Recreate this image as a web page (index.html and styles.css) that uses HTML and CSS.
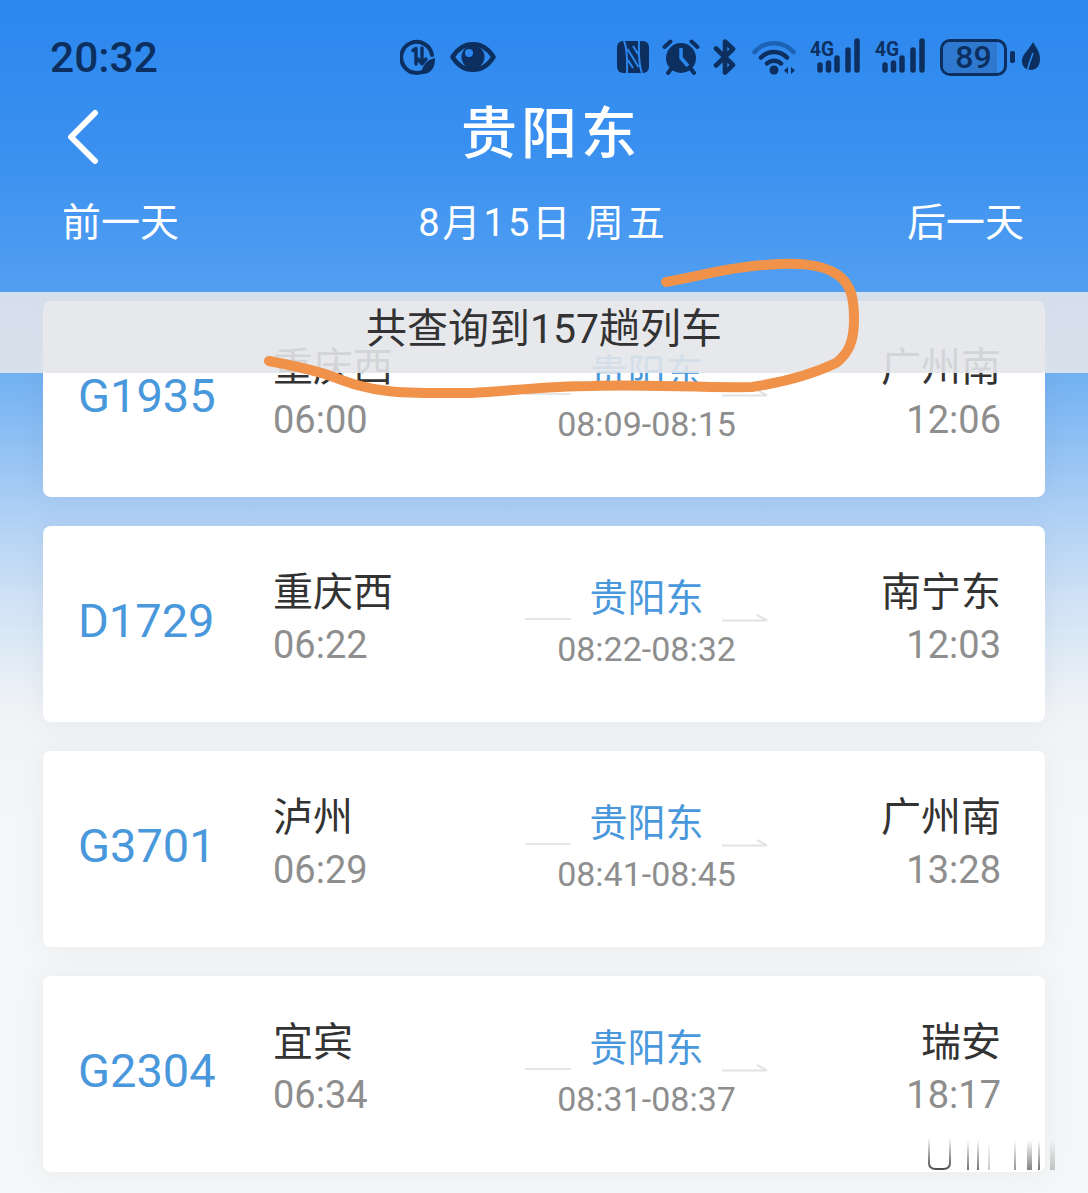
FILE: index.html
```html
<!DOCTYPE html>
<html lang="zh-CN">

<head>
    <meta charset="UTF-8">
    <meta name="viewport" content="width=device-width, initial-scale=1.0">
    <title>贵阳东</title>
    <link rel="stylesheet" href="styles.css">
</head>

<body>
    <div class="screen">
        <!-- status bar -->
        <div class="status">
            <div class="status__time">20:32</div>
            <div class="status__left">
                <svg class="icon" width="36" height="38" viewBox="0 0 36 38">
                    <path class="line" d="M28 30A15.5 15.5 0 1 1 32 17" stroke-width="4" />
                    <path class="line" d="M13 12.5L16 10.5V26M22 10V25M18 21L22 26L26 21" stroke-width="3.4" />
                    <path class="fill" d="M35 20C35 30 31 36 22 36C21 29 26 22 35 20Z" />
                </svg>
                <svg class="icon" width="46" height="32" viewBox="0 0 46 32">
                    <path class="line" d="M2.5 16C13 -1 33 -1 43.500 16C33 33 13 33 2.500 16Z" stroke-width="4.500" />
                    <circle class="fill" cx="23" cy="16" r="11.500" />
                    <circle class="cut" cx="19" cy="12" r="4" />
                </svg>
            </div>
            <div class="status__right">
                <svg class="icon" width="32" height="34" viewBox="0 0 32 34">
                    <rect class="fill" x="0" y="1" width="32" height="32" rx="6" />
                    <path class="line line--cut" d="M7 1C10 8 10.500 16 10 33M25 33C22 26 21.500 18 22 1M10.500 9L21.500 27M11 20L16 28M21 14L16 6" stroke-width="2" />
                </svg>
                <svg class="icon icon--alarm" width="38" height="36" viewBox="0 0 38 36">
                    <circle class="fill" cx="19" cy="19" r="15" />
                    <path class="line line--cut" d="M19 9V19L26 27" stroke-width="3.500" />
                    <path class="line" d="M2.500 8L8.500 2.500M35.500 8L29.500 2.500M9 30L6 34M29 30L32 34" stroke-width="4" />
                </svg>
                <svg class="icon icon--bt" width="24" height="36" viewBox="0 0 24 36">
                    <path class="line" d="M3 9.500L20 26L12 33.500V2.500L20 10L3 26.500" stroke-width="4.600" />
                </svg>
                <svg class="icon icon--wifi" width="46" height="36" viewBox="0 0 46 36">
                    <path class="line line--dim" d="M3.500 13A26 26 0 0 1 42.500 13" stroke-width="4.500" />
                    <path class="line" d="M10 18.500A18 18 0 0 1 36 18.500M16 24.500A10 10 0 0 1 30 24.500" stroke-width="4.500" />
                    <circle class="fill" cx="23" cy="31" r="4.500" />
                    <path class="fill" d="M37 28V35L33 31.500ZM40 28V35L44 31.500Z" />
                </svg>
                <svg class="icon icon--signal" width="50" height="48" viewBox="0 -6 50 48">
                    <text class="signal__label" x="0" y="17" textLength="24" lengthAdjust="spacingAndGlyphs">4G</text>
                    <path class="line" d="M10 26V31M18.500 24V31M27 19V31M38 11V31M47 2V31" stroke-width="5.500" />
                </svg>
                <svg class="icon icon--signal2" width="50" height="48" viewBox="0 -6 50 48">
                    <text class="signal__label" x="0" y="17" textLength="24" lengthAdjust="spacingAndGlyphs">4G</text>
                    <path class="line" d="M10 26V31M18.500 24V31M27 19V31M38 11V31M47 2V31" stroke-width="5.500" />
                </svg>
                <div class="battery">
                    <div class="battery__fill"></div>
                    <span class="battery__num">89</span>
                </div>
                <div class="battery__nub"></div>
                <svg class="icon icon--leaf" width="18" height="30" viewBox="0 0 18 30">
                    <path class="fill" d="M11 0C14 5 18 10 18 17C18 24 14 28 9 28C3 28 0 24 0 19C0 12 7 8 11 0Z" />
                    <path class="line line--cut" d="M11 11C9 16 7 21 5 30" stroke-width="1.600" />
                </svg>
            </div>
        </div>

        <div class="nav">
            <svg class="nav__back" width="34" height="56" viewBox="0 0 34 56">
                <path d="M29 4L5 28L29 52" />
            </svg>
            <div class="nav__title">贵阳东</div>
            <div></div>
        </div>

        <div class="dates">
            <div>前一天</div>
            <div class="dates__now">8月15日 周五</div>
            <div>后一天</div>
        </div>

        <div class="list">
            <div class="train">
                <div class="train__no">G1935</div>
                <div class="train__col">
                    <div class="train__name">重庆西</div>
                    <div class="train__time">06:00</div>
                </div>
                <div class="train__mid">
                    <div class="train__via">
                        <div class="train__dash"></div>
                        <div class="train__stop">贵阳东</div>
                        <svg class="train__arrow" width="46" height="9" viewBox="0 0 46 9"><path d="M0 7.500H45L35 2" /></svg>
                    </div>
                    <div class="train__range">08:09-08:15</div>
                </div>
                <div class="train__col train__col--end">
                    <div class="train__name">广州南</div>
                    <div class="train__time">12:06</div>
                </div>
            </div>

            <div class="train">
                <div class="train__no">D1729</div>
                <div class="train__col">
                    <div class="train__name">重庆西</div>
                    <div class="train__time">06:22</div>
                </div>
                <div class="train__mid">
                    <div class="train__via">
                        <div class="train__dash"></div>
                        <div class="train__stop">贵阳东</div>
                        <svg class="train__arrow" width="46" height="9" viewBox="0 0 46 9"><path d="M0 7.500H45L35 2" /></svg>
                    </div>
                    <div class="train__range">08:22-08:32</div>
                </div>
                <div class="train__col train__col--end">
                    <div class="train__name">南宁东</div>
                    <div class="train__time">12:03</div>
                </div>
            </div>

            <div class="train">
                <div class="train__no">G3701</div>
                <div class="train__col">
                    <div class="train__name">泸州</div>
                    <div class="train__time">06:29</div>
                </div>
                <div class="train__mid">
                    <div class="train__via">
                        <div class="train__dash"></div>
                        <div class="train__stop">贵阳东</div>
                        <svg class="train__arrow" width="46" height="9" viewBox="0 0 46 9"><path d="M0 7.500H45L35 2" /></svg>
                    </div>
                    <div class="train__range">08:41-08:45</div>
                </div>
                <div class="train__col train__col--end">
                    <div class="train__name">广州南</div>
                    <div class="train__time">13:28</div>
                </div>
            </div>

            <div class="train">
                <div class="train__no">G2304</div>
                <div class="train__col">
                    <div class="train__name">宜宾</div>
                    <div class="train__time">06:34</div>
                </div>
                <div class="train__mid">
                    <div class="train__via">
                        <div class="train__dash"></div>
                        <div class="train__stop">贵阳东</div>
                        <svg class="train__arrow" width="46" height="9" viewBox="0 0 46 9"><path d="M0 7.500H45L35 2" /></svg>
                    </div>
                    <div class="train__range">08:31-08:37</div>
                </div>
                <div class="train__col train__col--end">
                    <div class="train__name">瑞安</div>
                    <div class="train__time">18:17</div>
                </div>
                <!-- smear left over from the long screenshot -->
                <svg class="train__smear" width="128" height="36" viewBox="0 0 128 36">
                    <defs>
                        <linearGradient id="smear" x1="0" y1="0" x2="0" y2="1">
                            <stop offset="0" stop-color="#222" stop-opacity="0" />
                            <stop offset="1" stop-color="#222" stop-opacity="0.8" />
                        </linearGradient>
                    </defs>
                    <path d="M1 2V27Q1 33 8 33H15Q22 33 22 27V2" fill="none" stroke="url(#smear)" stroke-width="2" />
                    <rect x="39" y="4" width="2" height="30" fill="url(#smear)" opacity="0.8" />
                    <rect x="49" y="4" width="2" height="30" fill="url(#smear)" opacity="0.8" />
                    <rect x="60" y="4" width="2" height="30" fill="url(#smear)" opacity="0.3" />
                    <rect x="86" y="4" width="2" height="30" fill="url(#smear)" opacity="0.6" />
                    <rect x="99" y="4" width="5" height="30" fill="url(#smear)" opacity="0.7" />
                    <rect x="110" y="4" width="2" height="30" fill="url(#smear)" opacity="0.8" />
                    <rect x="122" y="4" width="5" height="30" fill="url(#smear)" opacity="0.3" />
                </svg>
            </div>
        </div>

        <!-- sticky count bar, sits over the first card -->
        <div class="count">共查询到157趟列车</div>

        <!-- hand drawn marker -->
        <svg class="marker" width="1088" height="420" viewBox="0 0 1088 420">
            <path d="M666 282C700 276 730 267 765 265C790 263 820 262 838 275C852 285 854 300 854 320C854 342 848 354 836 363C815 373 785 382 752 387C700 388 640 384 592 386C550 386 510 391 472 393C440 393 410 394 388 391C360 388 345 381 325 374C305 368 285 364 269 361" />
        </svg>
    </div>
</body>

</html>
```

FILE: styles.css
```css
* {
    box-sizing: border-box;
}

body {
    margin: 0;
    padding: 0;
    font-family: Roboto, "Noto Sans CJK SC", sans-serif;
}

.screen {
    position: relative;
    height: 1193px;
    overflow: hidden;
    padding-top: 32px;
    background: linear-gradient(180deg, #2b87ee 0, #3a90ef 150px, #529ff2 290px, #7db7f3 400px, #a9cdf4 500px, #d0e2f6 600px, #f0f3f6 710px, #f5f6f7 820px);
}

/* status bar */
.status {
    display: flex;
    align-items: center;
    height: 50px;
    padding: 0 48px 0 50px;
}

.status__time {
    width: 107px;
    font-size: 42.500px;
    font-weight: 500;
    color: #0c2f5f;
    white-space: nowrap;
}

.status__left {
    display: flex;
    align-items: center;
    gap: 14px;
    margin-left: 243px;
}

.status__right {
    display: flex;
    align-items: center;
    margin-left: auto;
}

.icon {
    display: block;
    flex: none;
}

.icon--alarm {
    margin-left: 13px;
}

.icon--bt {
    margin-left: 13px;
}

.icon--wifi {
    margin-left: 14px;
}

.icon--signal {
    margin-left: 13px;
}

.icon--signal2 {
    margin-left: 15px;
}

.icon--leaf {
    margin-left: 7px;
}

.fill {
    fill: #0c2f5f;
}

.cut {
    fill: #2b87ee;
}

.line {
    fill: none;
    stroke: #0c2f5f;
    stroke-linecap: round;
    stroke-linejoin: round;
}

.line--cut {
    stroke: #2b87ee;
    stroke-linecap: butt;
}

.line--dim {
    stroke: #1c62b4;
}

.signal__label {
    font-family: Roboto, sans-serif;
    font-size: 20px;
    font-weight: 700;
    fill: #0c2f5f;
}

.battery {
    position: relative;
    width: 67px;
    height: 37px;
    margin-left: 15px;
    border: 3px solid #0c2f5f;
    border-radius: 10px;
    overflow: hidden;
}

.battery__fill {
    width: 89%;
    height: 100%;
    background-color: #2e78d0;
}

.battery__num {
    position: absolute;
    left: 0;
    right: 0;
    top: 0;
    font-size: 32px;
    font-weight: 500;
    line-height: 31px;
    text-align: center;
    color: #0c2f5f;
}

.battery__nub {
    width: 5px;
    height: 12px;
    margin-left: 3px;
    border-radius: 2px;
    background-color: #0c2f5f;
}

/* title */
.nav {
    display: grid;
    grid-template-columns: 1fr auto 1fr;
    align-items: center;
    height: 100px;
    padding-left: 14px;
    color: #fff;
}

.nav__back {
    display: block;
    margin: 10px 0 0 52px;
}

.nav__back path {
    fill: none;
    stroke: #fff;
    stroke-width: 6;
    stroke-linecap: round;
    stroke-linejoin: round;
}

.nav__title {
    padding-top: 3px;
    font-size: 56px;
    font-weight: 500;
    letter-spacing: 4px;
    line-height: 1;
}

.dates {
    display: flex;
    justify-content: space-between;
    align-items: center;
    height: 76px;
    padding: 0 64px 2px 62px;
    font-size: 39px;
    color: #fff;
}

.dates__now {
    letter-spacing: 3px;
    font-size: 38px;
}

/* cards */
.list {
    display: flex;
    flex-direction: column;
    gap: 29px;
    padding: 43px 43px 0;
}

.train {
    position: relative;
    display: grid;
    grid-template-columns: 195px 252px 243px 232px;
    align-items: start;
    height: 196px;
    padding-left: 35px;
    border-radius: 8px;
    background-color: #fff;
    box-shadow: 0 0 30px rgba(0, 0, 0, 0.05);
}

.train__no {
    padding-top: 69px;
    font-size: 47px;
    line-height: 52px;
    color: #4a98dc;
}

.train__col {
    padding-top: 41px;
}

.train__col--end {
    margin-right: -1px;
    text-align: right;
}

.train__name {
    font-size: 40px;
    line-height: 52px;
    color: #333;
}

.train__time {
    font-size: 38px;
    line-height: 52px;
    color: #8e8e8e;
}

.train__mid {
    padding-top: 46px;
    text-align: center;
}

.train__via {
    display: flex;
    justify-content: space-between;
    align-items: flex-end;
    height: 52px;
}

.train__dash {
    width: 46px;
    height: 2px;
    margin-bottom: 4px;
    background-color: #e4e6e8;
}

.train__stop {
    padding-top: 2px;
    font-size: 38px;
    line-height: 52px;
    color: #4a98dc;
}

.train__arrow {
    display: block;
    margin-bottom: 2px;
}

.train__arrow path {
    fill: none;
    stroke: #e0e2e4;
    stroke-width: 2;
}

.train__range {
    margin-top: -1px;
    font-size: 34px;
    line-height: 52px;
    color: #8e8e8e;
}

.train__smear {
    position: absolute;
    left: 885px;
    top: 160px;
}

/* overlays */
.count {
    position: absolute;
    left: 0;
    right: 0;
    top: 292px;
    height: 81px;
    font-size: 41px;
    line-height: 74px;
    text-align: center;
    color: #333;
    background-color: rgba(227, 229, 234, 0.9);
}

.marker {
    position: absolute;
    left: 0;
    top: 0;
    pointer-events: none;
}

.marker path {
    fill: none;
    stroke: #f0924a;
    stroke-width: 10;
    stroke-linecap: round;
    stroke-linejoin: round;
}
```
